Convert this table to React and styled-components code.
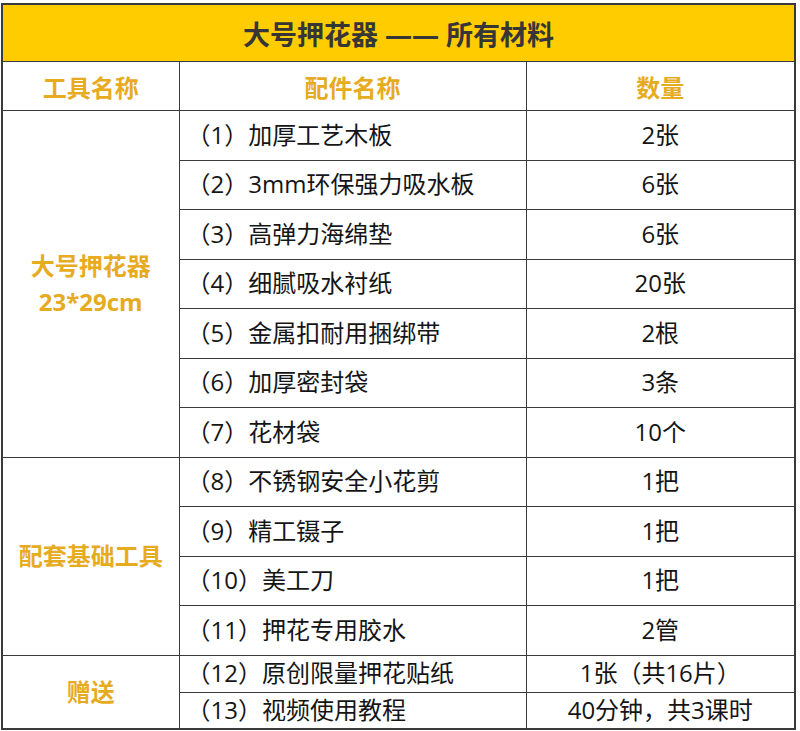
import React from 'react'
import styled, { createGlobalStyle } from 'styled-components'

const GlobalStyle = createGlobalStyle`
  body {
    margin: 0;
    background: #ffffff;
    font-family: "Open Sans", "Noto Sans CJK SC", sans-serif;
  }
`

const Page = styled.div`
  padding: 3px 0 0 1px;
`

const Table = styled.table`
  width: 795px;
  border-collapse: collapse;
  table-layout: fixed;
  border: 2px solid #3a3a3a;
  font-family: "Open Sans", "Noto Sans CJK SC", sans-serif;
`

const TitleCell = styled.th`
  height: 56px;
  padding: 0;
  background: #ffcc00;
  color: #363636;
  font-size: 27px;
  font-weight: 700;
  text-align: center;
  border: 1px solid #3a3a3a;
`

const Row = styled.tr`
  height: ${p => p.$h}px;
`

const HeadCell = styled.th`
  padding: 0;
  color: #e7ab1f;
  font-size: 24px;
  font-weight: 700;
  text-align: center;
  border: 1px solid #3a3a3a;
`

const GroupCell = styled.td`
  padding: 0;
  color: #e7ab1f;
  font-size: 24px;
  font-weight: 700;
  line-height: 36px;
  text-align: center;
  border: 1px solid #3a3a3a;
`

const ItemCell = styled.td`
  padding: 0 0 0 7px;
  color: #151515;
  font-size: 24px;
  line-height: 1.2;
  text-align: left;
  white-space: nowrap;
  border: 1px solid #3a3a3a;
`

const QtyCell = styled(ItemCell)`
  padding: 0;
  text-align: center;
`

const groups = [
  {
    label: ['大号押花器', '23*29cm'],
    items: [
      ['（1）加厚工艺木板', '2张'],
      ['（2）3mm环保强力吸水板', '6张'],
      ['（3）高弹力海绵垫', '6张'],
      ['（4）细腻吸水衬纸', '20张'],
      ['（5）金属扣耐用捆绑带', '2根'],
      ['（6）加厚密封袋', '3条'],
      ['（7）花材袋', '10个'],
    ],
  },
  {
    label: ['配套基础工具'],
    items: [
      ['（8）不锈钢安全小花剪', '1把'],
      ['（9）精工镊子', '1把'],
      ['（10）美工刀', '1把'],
      ['（11）押花专用胶水', '2管'],
    ],
  },
  {
    label: ['赠送'],
    small: true,
    items: [
      ['（12）原创限量押花贴纸', '1张（共16片）'],
      ['（13）视频使用教程', '40分钟，共3课时'],
    ],
  },
]

export default function App() {
  return (
    <Page>
      <GlobalStyle />
      <Table>
        <colgroup>
          <col style={{ width: 177 }} />
          <col style={{ width: 347 }} />
          <col />
        </colgroup>
        <thead>
          <Row $h={57}>
            <TitleCell colSpan={3}>大号押花器 —— 所有材料</TitleCell>
          </Row>
          <Row $h={49}>
            <HeadCell>工具名称</HeadCell>
            <HeadCell>配件名称</HeadCell>
            <HeadCell>数量</HeadCell>
          </Row>
        </thead>
        <tbody>
          {groups.map(g =>
            g.items.map(([name, qty], i) => (
              <Row key={name} $h={g.small ? 37 : 49.5}>
                {i === 0 && (
                  <GroupCell rowSpan={g.items.length}>
                    {g.label.map((l, j) => (
                      <div key={j}>{l}</div>
                    ))}
                  </GroupCell>
                )}
                <ItemCell>{name}</ItemCell>
                <QtyCell>{qty}</QtyCell>
              </Row>
            ))
          )}
        </tbody>
      </Table>
    </Page>
  )
}
